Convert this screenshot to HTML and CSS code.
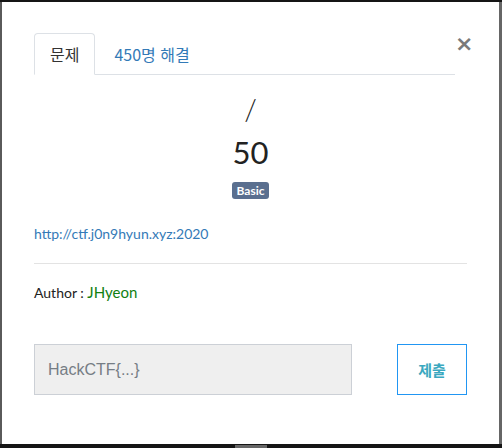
FILE: index.html
```html
<!DOCTYPE html>
<html lang="ko">
<head>
<meta charset="utf-8">
<link rel="stylesheet" href="styles.css">
</head>
<body>
<div class="modal">
  <div class="tabs-row">
    <ul class="tabs">
      <li class="tab active">문제</li>
      <li class="tab">450명 해결</li>
    </ul>
    <span class="close">&times;</span>
  </div>
  <div class="center">
    <div class="title">/</div>
    <div class="points">50</div>
    <span class="badge">Basic</span>
  </div>
  <a class="link" href="#">http://ctf.j0n9hyun.xyz:2020</a>
  <hr class="rule">
  <p class="author">Author : <span class="name">JHyeon</span></p>
  <div class="submit-row">
    <input class="flag" type="text" placeholder="HackCTF{...}">
    <button class="btn">제출</button>
  </div>
</div>
<div class="bar"></div>
</body>
</html>
```
FILE: styles.css
```css
html, body {
  margin: 0;
  padding: 0;
}
body {
  width: 502px;
  height: 448px;
  background: #151515;
  font-family: Lato, "Noto Sans CJK KR", sans-serif;
  overflow: hidden;
  position: relative;
}
.modal {
  box-sizing: border-box;
  margin: 2px 0 0 2px;
  width: 497px;
  height: 442px;
  background: #fff;
  padding: 31px 32px 0 32px;
  box-shadow: -2px 0 0 #5a5a5a, 3px 0 0 #666;
}
.tabs-row {
  display: flex;
  align-items: flex-start;
}
.tabs {
  list-style: none;
  margin: 0;
  padding: 0;
  display: flex;
  flex-shrink: 0;
  width: 421px;
  border-bottom: 1px solid #dde1e6;
}
.tab {
  font-family: "Noto Sans CJK KR", Lato, sans-serif;
  font-size: 16px;
  line-height: 20px;
  padding: 10px 16px 10px 17px;
  color: #337ab7;
  border: 1px solid transparent;
  border-radius: 4px 4px 0 0;
  margin-bottom: -1px;
}
.tab.active {
  color: #333;
  border-color: #dde1e6;
  border-bottom-color: #fff;
  padding: 10px 15px;
  margin-right: 1px;
}
.close {
  margin-left: auto;
  margin-right: 4px;
  margin-top: 1px;
  font-family: "DejaVu Sans", sans-serif;
  font-size: 22px;
  line-height: 20px;
  font-weight: bold;
  color: #7a7a7a;
}
.center {
  display: flex;
  flex-direction: column;
  align-items: center;
}
.title {
  font-size: 29px;
  line-height: 36px;
  margin-top: 16px;
  color: #222;
  font-weight: 300;
}
.points {
  font-size: 31px;
  line-height: 40px;
  margin-top: 5px;
  color: #222;
}
.badge {
  margin-top: 10px;
  background: #5a6f8f;
  color: #fff;
  font-size: 12px;
  font-weight: bold;
  line-height: 17px;
  padding: 0 4px;
  border-radius: 3px;
}
.link {
  display: block;
  margin-top: 26px;
  font-size: 14px;
  line-height: 18px;
  color: #337ab7;
  text-decoration: none;
}
.rule {
  border: 0;
  border-top: 1px solid #e3e3e3;
  margin: 20px 0 0 0;
}
.author {
  margin: 19px 0 0 0;
  font-size: 14px;
  line-height: 18px;
  color: #222;
}
.name {
  color: #118011;
  font-size: 15px;
}
.submit-row {
  display: flex;
  align-items: flex-start;
  justify-content: space-between;
  margin-top: 42px;
}
.flag {
  box-sizing: border-box;
  width: 318px;
  height: 51px;
  margin: 0;
  background: #efefef;
  border: 1px solid #ccd0d6;
  padding: 0 13px;
  font-family: "Liberation Sans", Arial, sans-serif;
  font-size: 16px;
  color: #555;
}
.flag::placeholder {
  color: #767d85;
}
.btn {
  box-sizing: border-box;
  width: 70px;
  height: 51px;
  margin: 0;
  background: #fff;
  border: 1px solid #2196f3;
  font-family: "Noto Sans CJK KR", sans-serif;
  font-size: 15px;
  font-weight: bold;
  color: #3aa8c0;
}
.bar {
  position: absolute;
  left: 235px;
  bottom: 0;
  width: 32px;
  height: 3px;
  background: #666;
}
```
